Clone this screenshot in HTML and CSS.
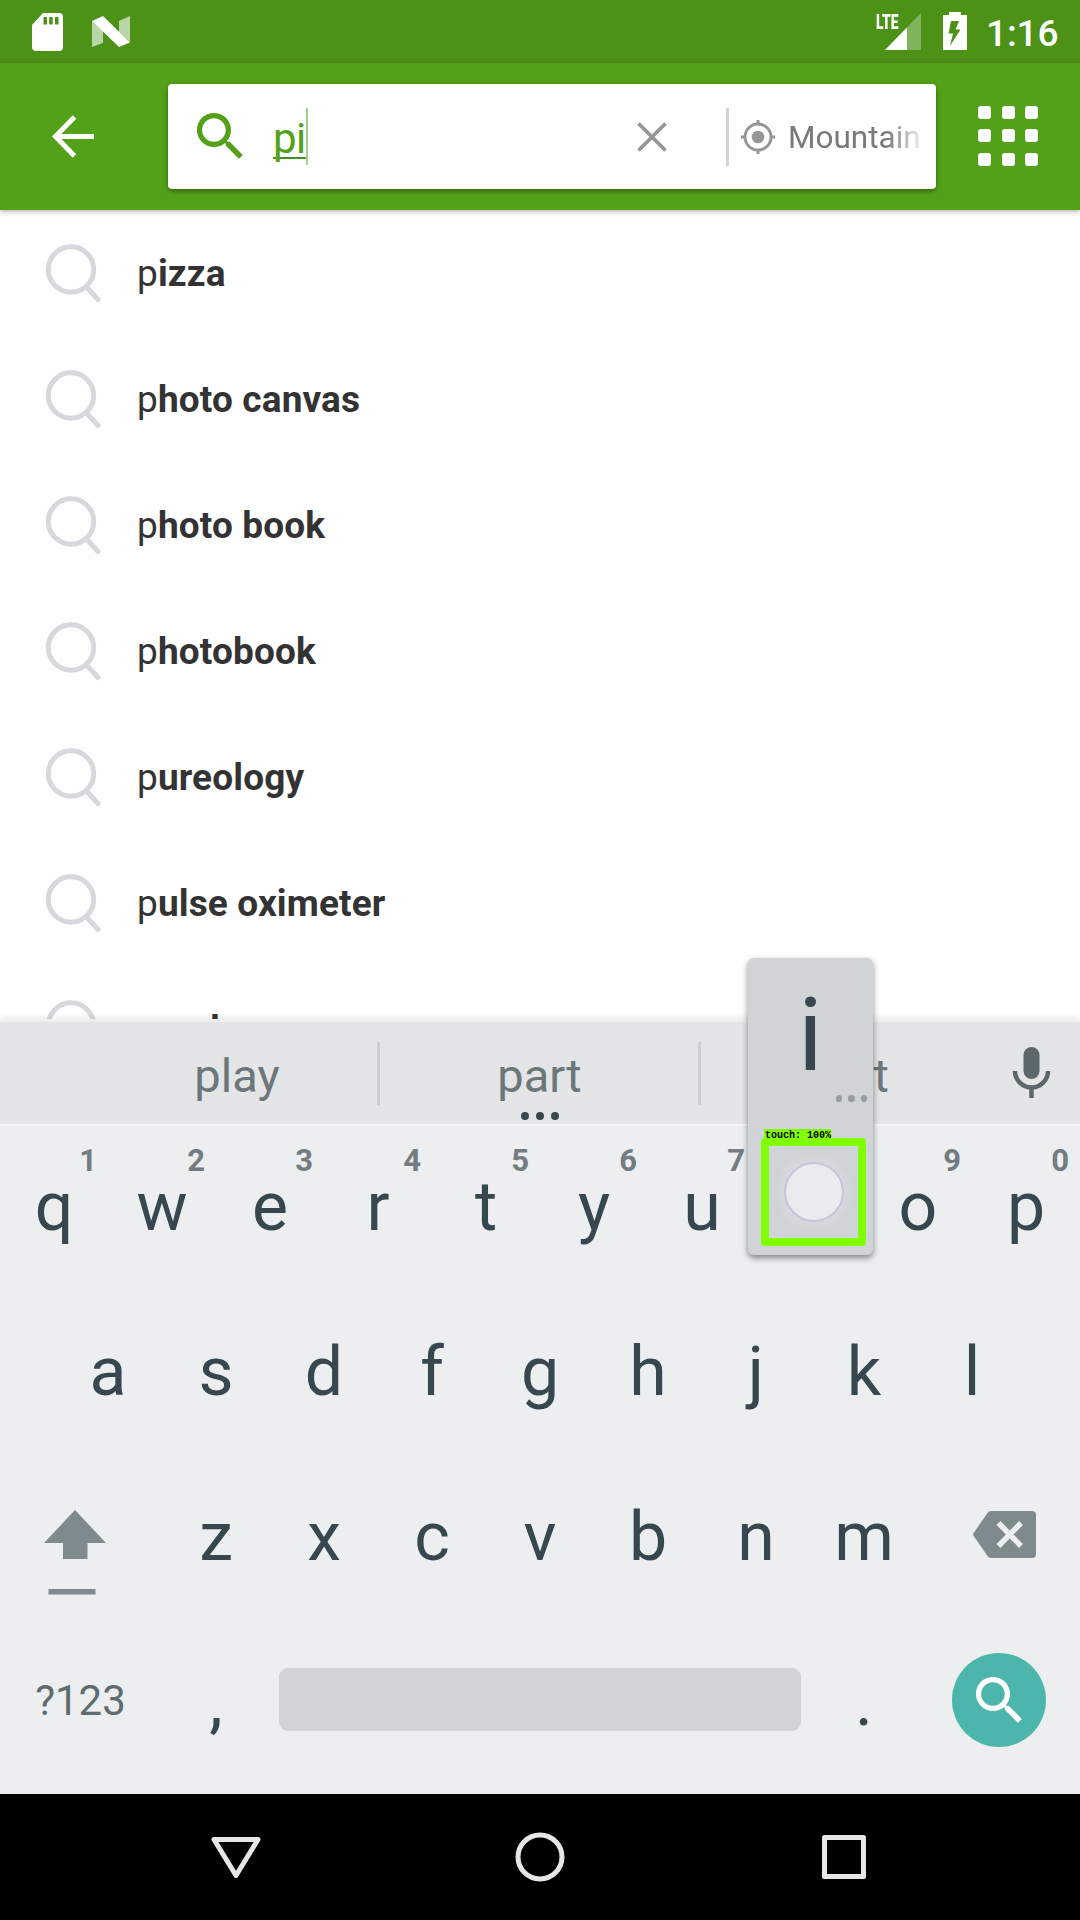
FILE: index.html
```html
<!DOCTYPE html>
<html lang="en">
<head>
<meta charset="utf-8">
<title>Search</title>
<link rel="stylesheet" href="styles.css">
</head>
<body>
<svg class="defs" width="0" height="0">
  <symbol id="lens" viewBox="0 0 56 60"><circle cx="26" cy="26.500" r="22.700"/><path d="M42 44.500L53 56.500"/></symbol>
  <symbol id="search" viewBox="0 0 24 24"><path d="M15.500 14h-.79l-.28-.27A6.471 6.471 0 0 0 16 9.500 6.500 6.500 0 1 0 9.500 16c1.610 0 3.090-.59 4.230-1.570l.27.28v.79l5 4.990L20.490 19l-4.990-5zm-6 0C7.010 14 5 11.990 5 9.500S7.010 5 9.500 5 14 7.010 14 9.500 11.990 14 9.500 14z"/></symbol>
</svg>
<div class="screen">
  <header class="status">
    <svg class="sd" viewBox="0 0 31 38"><path fill="#fff" fill-rule="evenodd" d="M11 0H27Q31 0 31 4V34Q31 38 27 38H4Q0 38 0 34V12ZM11.500 4V11.500H15V4ZM17.200 4V11.500H20.700V4ZM23 4V11.500H26.500V4Z"/></svg>
    <svg class="nougat" viewBox="0 0 38 31"><path fill="#fff" opacity=".62" d="M0 5L11 15V27L0 31ZM27 5L38 0V26L27 16Z"/><path fill="#fff" d="M0 5L11 0L38 26.500L27 31Z"/></svg>
    <span class="spacer"></span>
    <div class="cell"><span class="lte">LTE</span><svg viewBox="0 0 36 37"><path fill="#fff" opacity=".3" d="M36 0V37H0Z"/><path fill="#fff" d="M22 14.500V37H0Z"/></svg></div>
    <svg class="battery" viewBox="0 0 24 38"><path fill="#fff" fill-rule="evenodd" d="M6 0H18V3H24V38H0V3H6ZM8 9L5.500 21.500H10L7 34L17.500 17.500H12.500L16 9Z"/></svg>
    <span class="clock">1:16</span>
  </header>
  <div class="appbar">
    <svg class="back" viewBox="0 0 43 43"><path d="M42 21.500H4M22.500 2L3.500 21.500L22.500 41" fill="none" stroke="#fff" stroke-width="5"/></svg>
    <div class="searchbox">
      <svg class="glass"><use href="#search"/></svg>
      <span class="query">pi</span><span class="caret"></span>
      <span class="spacer"></span>
      <svg class="clear" viewBox="0 0 30 30"><path d="M1.500 1.500L28.500 28.500M28.500 1.500L1.500 28.500" stroke="#949697" stroke-width="3.800"/></svg>
      <span class="rule"></span>
      <svg class="gps" viewBox="0 0 34 34"><g fill="none" stroke="#949697" stroke-width="2.900"><circle cx="17" cy="17" r="13"/><path d="M17 0V5M17 29V34M0 17H5M29 17H34"/></g><circle cx="17" cy="17" r="6.300" fill="#949697"/></svg>
      <span class="place">Mountain</span>
    </div>
    <div class="apps"><i></i><i></i><i></i><i></i><i></i><i></i><i></i><i></i><i></i></div>
  </div>
  <main class="list">
    <div class="item"><svg class="lens"><use href="#lens"/></svg><p>p<b>izza</b></p></div>
    <div class="item"><svg class="lens"><use href="#lens"/></svg><p>p<b>hoto canvas</b></p></div>
    <div class="item"><svg class="lens"><use href="#lens"/></svg><p>p<b>hoto book</b></p></div>
    <div class="item"><svg class="lens"><use href="#lens"/></svg><p>p<b>hotobook</b></p></div>
    <div class="item"><svg class="lens"><use href="#lens"/></svg><p>p<b>ureology</b></p></div>
    <div class="item"><svg class="lens"><use href="#lens"/></svg><p>p<b>ulse oximeter</b></p></div>
    <div class="item"><svg class="lens"><use href="#lens"/></svg><p>p<b>andora</b></p></div>
  </main>
  <section class="keyboard">
    <div class="strip">
      <span class="word">play</span><span class="bar"></span>
      <span class="word more">part<span class="hint"><i></i><i></i><i></i></span></span><span class="bar"></span>
      <span class="word">post</span>
      <svg class="mic" viewBox="0 0 37 51"><rect x="10.500" y="0" width="16" height="32" rx="8" fill="#5c676c"/><path d="M2 24a16.500 16.500 0 0 0 33 0M18.500 40V51" fill="none" stroke="#5c676c" stroke-width="4.500"/></svg>
    </div>
    <div class="keys">
      <div class="row">
        <span class="key">q<sup>1</sup></span><span class="key">w<sup>2</sup></span><span class="key">e<sup>3</sup></span><span class="key">r<sup>4</sup></span><span class="key">t<sup>5</sup></span><span class="key">y<sup>6</sup></span><span class="key">u<sup>7</sup></span><span class="key"></span><span class="key">o<sup>9</sup></span><span class="key">p<sup>0</sup></span>
      </div>
      <div class="row">
        <span class="key">a</span><span class="key">s</span><span class="key">d</span><span class="key">f</span><span class="key">g</span><span class="key">h</span><span class="key">j</span><span class="key">k</span><span class="key">l</span>
      </div>
      <div class="row">
        <span class="key wide shift"><svg viewBox="0 0 64 85"><path fill="#7f8a8f" d="M32 0L63 33H44.500V49H20V33H1ZM5.500 79H52.500V84.500H5.500Z"/></svg></span>
        <span class="key">z</span><span class="key">x</span><span class="key">c</span><span class="key">v</span><span class="key">b</span><span class="key">n</span><span class="key">m</span>
        <span class="key wide erase"><svg viewBox="0 0 63 47"><path fill="#7f8a8f" d="M18 0H59Q63 0 63 4V43Q63 47 59 47H18Q16 47 14.500 45L.7 25Q-.3 23.500 .7 22L14.500 2Q16 0 18 0Z"/><path d="M25.500 12L48 35M48 12L25.500 35" stroke="#eceeef" stroke-width="5.500"/></svg></span>
      </div>
      <div class="row">
        <span class="key wide sym">?123</span><span class="key">,</span><span class="space"></span><span class="key">.</span>
        <span class="key wide"><span class="go"><svg class="glass"><use href="#search"/></svg></span></span>
      </div>
    </div>
    <div class="popup">
      <span class="letter">i</span><span class="dots"><i></i><i></i><i></i></span>
      <div class="touch"><span class="tag">touch: 100%</span><span class="dot"></span></div>
    </div>
  </section>
  <nav class="nav">
    <svg viewBox="0 0 52 52"><path d="M4 8.500H48L26 44.500Z"/></svg>
    <svg viewBox="0 0 52 52"><circle cx="26" cy="26" r="22"/></svg>
    <svg viewBox="0 0 52 52"><rect x="6.500" y="6.500" width="39" height="39"/></svg>
  </nav>
</div>
</body>
</html>
```
FILE: styles.css
```css
* { box-sizing: border-box; }
body { margin: 0; font-family: Roboto, "Liberation Sans", sans-serif; }
svg { display: block; flex: none; overflow: visible; }
.defs { position: absolute; }
.screen { width: 1080px; height: 1920px; display: flex; flex-direction: column; overflow: hidden; background: #fefefe; }
.spacer { flex: 1; }

.status { height: 63px; flex: none; display: flex; align-items: flex-start; padding: 12px 21px 0 32px; background: #4b9217; color: #fff; }
.sd { width: 31px; height: 38px; margin-top: 1px; }
.nougat { width: 38px; height: 31px; margin: 4px 0 0 29px; }
.cell { display: flex; width: 46px; height: 38px; padding-top: 1px; justify-content: flex-end; margin-right: 22px; }
.cell svg { width: 36px; height: 37px; }
.lte { width: 24px; margin-right: -15px; font-size: 21px; line-height: 18px; font-weight: 900; transform: scaleX(.66); transform-origin: 0 0; }
.battery { width: 24px; height: 38px; margin-right: 19px; }
.clock { font-size: 37px; font-weight: 500; line-height: 44px; width: 73px; white-space: nowrap; letter-spacing: -.1px; }

.appbar { height: 147px; flex: none; display: flex; align-items: center; padding-left: 52px; background: #53a118; box-shadow: 0 1px 5px rgba(60,20,20,.4); position: relative; }
.back { width: 43px; height: 43px; }
.searchbox { width: 768px; height: 105px; margin-left: 73px; padding: 0 15px 0 21px; display: flex; align-items: center; background: #fefefe; border-radius: 4px; box-shadow: 0 2px 5px rgba(0,0,0,.4); }
.glass { width: 63px; height: 63px; fill: #53a118; }
.query { margin-left: 21px; padding-top: 4px; font-size: 42px; line-height: 56px; letter-spacing: -.5px; color: #53a118; text-decoration: underline 2px #4d8b24; text-underline-offset: 4px; text-decoration-skip-ink: none; }
.caret { width: 2px; height: 57px; background: #a4cf87; }
.clear { width: 30px; height: 30px; margin-right: 59px; }
.rule { width: 3px; height: 58px; background: #d0d4d9; }
.gps { width: 34px; height: 34px; margin: 0 13px 0 12px; }
.place { width: 133px; flex: none; margin-top: 3px; font-size: 31.500px; line-height: 42px; color: #77797b; -webkit-mask-image: linear-gradient(90deg, #000 74%, transparent 104%); mask-image: linear-gradient(90deg, #000 74%, transparent 104%); }
.apps { display: grid; grid-template-columns: repeat(3, 13px); gap: 10.500px; margin: -2px 0 0 42px; }
.apps i { height: 13px; border-radius: 3px; background: #fff; }

.list { height: 809px; flex: none; overflow: hidden; }
.item { height: 126px; display: flex; align-items: flex-start; padding: 33px 0 0 45px; }
.item p { margin: 8px 0 0 36px; font-size: 37px; line-height: 46px; letter-spacing: .13px; color: #333; white-space: nowrap; }
.lens { width: 56px; height: 60px; fill: none; stroke: #d6d8db; stroke-width: 5; stroke-linecap: round; }

.keyboard { height: 775px; flex: none; position: relative; background: #eceeef; border-top: 3px solid #efefef; box-shadow: 0 -2px 5px rgba(0,0,0,.07); color: #37474f; }
.strip { height: 102px; display: flex; align-items: center; padding: 0 30px 0 96px; background: #e4e5e6; }
.word { flex: 1; text-align: center; font-size: 47px; line-height: 60px; padding: 6px 0 0 1px; color: #6c777a; }
.word.more { flex: 0 0 318px; height: 102px; padding-top: 24px; }
.hint { display: flex; gap: 7px; justify-content: center; margin-top: 6px; }
.hint i { width: 8px; height: 8px; border-radius: 50%; background: #37474f; }
.bar { width: 3px; height: 63px; background: #cdd0d2; }
.strip .word:nth-of-type(5) { flex: 0 0 282px; }
.mic { width: 37px; height: 51px; margin-left: 30px; margin-top: -1px; }
.keys { border-top: 2px solid #f5f6f7; }
.row { height: 165px; display: flex; justify-content: center; align-items: flex-start; }
.key { width: 108px; height: 160px; position: relative; text-align: center; font-size: 68px; line-height: 162px; }
.key sup { position: absolute; right: 11px; top: 17px; font-size: 31px; line-height: 36px; font-weight: 700; color: #737c80; }
.key.wide { width: 162px; display: flex; align-items: center; justify-content: center; padding: 0; }
.shift svg { width: 64px; height: 85px; margin: 33px 12px 0 0; }
.erase svg { width: 63px; height: 47px; margin: -4px 0 0 10px; }
.key.sym { font-size: 42px; line-height: 160px; color: #5f6c71; padding-right: 1px; }
.space { width: 522px; height: 63px; margin: 47px 9px 0; border-radius: 9px; background: #d1d4d7; }
.go { width: 94px; height: 94px; margin: -2px 0 0 0; border-radius: 50%; background: #4db6ac; display: flex; align-items: center; justify-content: center; }
.go .glass { fill: #fff; }

.popup { position: absolute; left: 748px; top: -64px; width: 125px; height: 297px; border-radius: 6px; background: #d1d4d7; box-shadow: 0 3px 6px rgba(0,0,0,.45); }
.letter { display: block; text-align: center; font-size: 102px; line-height: 120px; padding-top: 17px; height: 137px; }
.dots { display: flex; gap: 6px; justify-content: flex-end; padding-right: 6px; }
.dots i { width: 6.500px; height: 6.500px; border-radius: 50%; background: #969ea1; }
.touch { position: absolute; left: 13px; top: 180px; width: 105px; height: 108px; border: 8px solid #80ff00; border-radius: 4px; display: flex; align-items: center; justify-content: center; }
.tag { position: absolute; left: -5px; top: -17px; width: 67px; height: 11px; padding-left: 1px; font: 700 10px/13px "Liberation Mono", "DejaVu Sans Mono", monospace; white-space: nowrap; color: #000; background: #80ff00; }
.dot { width: 60px; height: 60px; border-radius: 50%; border: 2px solid #c3c5dc; background: #e9ebee; box-shadow: 0 0 12px rgba(240,240,245,.5); }

.nav { height: 126px; background: #000; display: flex; justify-content: center; align-items: center; gap: 252px; }
.nav svg { width: 52px; height: 52px; fill: none; stroke: #e6e6e6; stroke-width: 5; stroke-linejoin: round; }
```
